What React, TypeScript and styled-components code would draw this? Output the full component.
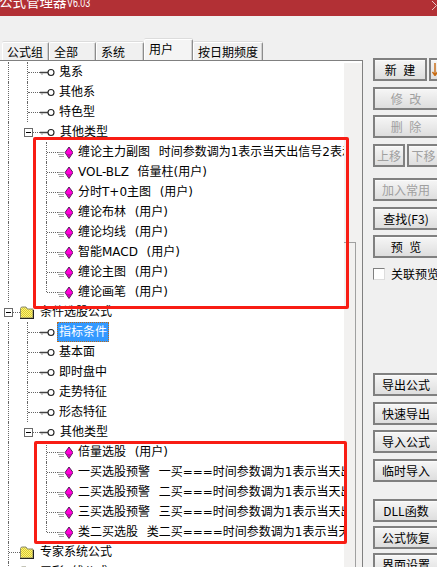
import React from 'react';
import styled, { createGlobalStyle } from 'styled-components';

const FONT = '"DejaVu Sans", "Noto Sans CJK SC", sans-serif';

const GlobalStyle = createGlobalStyle`
  html, body {
    margin: 0;
    padding: 0;
    background: #f0f0f0;
  }
`;

const Window = styled.div`
  width: 437px;
  height: 567px;
  overflow: hidden;
  display: flex;
  flex-direction: column;
  background: #f0f0f0;
  font-family: "Noto Sans CJK SC", "Liberation Sans", sans-serif;
  font-size: 12px;
  color: #000;
`;

const TitleBar = styled.div`
  height: 16px;
  flex: none;
  background: #b23035;
  color: #fff;
  display: flex;
  justify-content: space-between;
  align-items: flex-end;
  overflow: hidden;
`;

const TitleText = styled.span`
  font-size: 13.5px;
  line-height: 20px;
  white-space: nowrap;
  margin: 0 0 3px -1px;
`;

// the version number is drawn much narrower than the font gives
const Version = styled.span`
  display: inline-block;
  font-family: "Liberation Sans", sans-serif;
  font-size: 13px;
  transform: scaleX(0.68);
  transform-origin: left center;
`;

const CloseMark = styled.svg`
  width: 5px;
  height: 9px;
  margin: 0 0 5px;
  align-self: center;
`;

const Body = styled.div`
  flex: 1;
  min-height: 0;
  display: flex;
`;

const LeftColumn = styled.div`
  width: 363px;
  flex: none;
  display: flex;
  flex-direction: column;
`;

const TabStrip = styled.div`
  height: 44px;
  flex: none;
  display: flex;
  align-items: flex-end;
  padding-left: 2px;
`;

const Tab = styled.div<{ $width: number; $active?: boolean }>`
  width: ${p => p.$width}px;
  height: ${p => (p.$active ? 21 : 18)}px;
  box-sizing: border-box;
  padding-left: 4px;
  border: 1px solid #8c8c8c;
  border-top-color: #fff;
  border-left-color: #fff;
  border-bottom: none;
  border-radius: 2px 2px 0 0;
  box-shadow: inset -1px 0 0 #d0d0d0, 0 -1px 0 #dcdcdc;
  background: ${p => (p.$active ? '#f4f4f4' : '#f0f0f0')};
  line-height: ${p => (p.$active ? 17 : 18)}px;
  white-space: nowrap;
`;

const TreePanel = styled.div`
  flex: 1;
  min-height: 0;
  display: flex;
  position: relative;
  border-top: 1px solid #808080;
  border-right: 1px solid #808080;
`;

const TreeList = styled.div`
  width: 344px;
  flex: none;
  overflow: hidden;
  background: #fff;
  padding-top: 1px;
`;

const ScrollTrack = styled.div`
  flex: 1;
  background: #f2f1f0;
  border-top: 2px solid #fff;
  padding-top: 179px;
`;

const ScrollEdge = styled.div`
  width: 12px;
  height: 400px;
  box-sizing: border-box;
  border-top: 1px solid #a0a0a0;
  border-right: 1px solid #a0a0a0;
`;

const Row = styled.div`
  height: 20px;
  display: flex;
  align-items: stretch;
  white-space: nowrap;
`;

const Guide = styled.div<{ $width: number; $line?: 'full' | 'half' | 'none' }>`
  width: ${p => p.$width}px;
  flex: none;
  position: relative;
  &::before {
    content: '';
    display: ${p => (p.$line && p.$line !== 'none' ? 'block' : 'none')};
    height: ${p => (p.$line === 'half' ? '10px' : '20px')};
    width: 0;
    border-left: 1px dotted #666;
    position: absolute;
    right: 0;
    top: 0;
  }
`;

const Connector = styled.div<{ $width: number }>`
  width: ${p => p.$width}px;
  height: 0;
  flex: none;
  align-self: center;
  border-top: 1px dotted #666;
`;

const ExpandBox = styled.div`
  width: 9px;
  height: 9px;
  flex: none;
  align-self: center;
  box-sizing: border-box;
  border: 1px solid #6a6a6a;
  background: #fff;
  position: relative;
  margin-top: 1px;
  &::after {
    content: '';
    position: absolute;
    left: 1px;
    top: 3px;
    width: 5px;
    height: 1px;
    background: #000;
  }
`;

const Label = styled.span<{ $gap: number; $selected?: boolean }>`
  margin-left: ${p => (p.$selected ? p.$gap - 1 : p.$gap)}px;
  padding: 0 ${p => (p.$selected ? 2 : 1)}px;
  font-family: ${FONT};
  line-height: 20px;
  white-space: pre;
  word-spacing: 0.5px;
  ${p =>
    p.$selected
      ? `
    background: #3399ff;
    color: #fff;
    outline: 1px dotted #b86a1c;
    outline-offset: -1px;
  `
      : ''}
`;

const IconBox = styled.svg`
  flex: none;
  align-self: center;
`;

const KeyIcon = () => (
  <IconBox width="15" height="9" viewBox="0 0 15 9">
    <path d="M0 4.5h8" stroke="#444" strokeWidth="1.5" fill="none" />
    <path d="M1 6h2" stroke="#999" strokeWidth="1" fill="none" />
    <circle cx="11" cy="4.5" r="3" fill="#fff" stroke="#222" strokeWidth="1.1" />
  </IconBox>
);

const FormulaIcon = () => (
  <IconBox width="15" height="13" viewBox="0 0 15 13">
    <path d="M0 6.5h6M0 8.5h6M1 10.5h5" stroke="#a5a5a5" strokeWidth="1" fill="none" />
    <path d="M11 1L15 6.5L11 12.5L7 6.5Z" fill="#ff00d8" stroke="#2a0a33" strokeWidth="0.8" />
    <path d="M8.5 8L11 11.2L13.5 8Z" fill="#c800b0" />
  </IconBox>
);

const FolderIcon = () => (
  <IconBox width="14" height="13" viewBox="0 0 14 13">
    <defs>
      <pattern id="dither" width="2" height="2" patternUnits="userSpaceOnUse">
        <rect width="2" height="2" fill="#fff27a" />
        <rect width="1" height="1" fill="#d8cc30" />
        <rect x="1" y="1" width="1" height="1" fill="#d8cc30" />
      </pattern>
    </defs>
    <path d="M0.5 12V2.5L1.5 1H6L7.5 3H13V12Z" fill="url(#dither)" stroke="#8a8a70" strokeWidth="1" />
    <path d="M0 12.5H14M13.5 4V13" stroke="#222" strokeWidth="1" />
  </IconBox>
);

type RowItem = { kind: 'root' | 'group' | 'key' | 'item'; text: string; selected?: boolean; last?: boolean; open?: boolean };

const rows: RowItem[] = [
  { kind: 'key', text: '鬼系' },
  { kind: 'key', text: '其他系' },
  { kind: 'key', text: '特色型' },
  { kind: 'group', text: '其他类型' },
  { kind: 'item', text: '缠论主力副图  时间参数调为1表示当天出信号2表示第二天' },
  { kind: 'item', text: 'VOL-BLZ  倍量柱(用户)' },
  { kind: 'item', text: '分时T+0主图  (用户)' },
  { kind: 'item', text: '缠论布林  (用户)' },
  { kind: 'item', text: '缠论均线  (用户)' },
  { kind: 'item', text: '智能MACD  (用户)' },
  { kind: 'item', text: '缠论主图  (用户)' },
  { kind: 'item', text: '缠论画笔  (用户)', last: true },
  { kind: 'root', text: '条件选股公式', open: true },
  { kind: 'key', text: '指标条件', selected: true },
  { kind: 'key', text: '基本面' },
  { kind: 'key', text: '即时盘中' },
  { kind: 'key', text: '走势特征' },
  { kind: 'key', text: '形态特征' },
  { kind: 'group', text: '其他类型' },
  { kind: 'item', text: '倍量选股  (用户)' },
  { kind: 'item', text: '一买选股预警  一买===时间参数调为1表示当天出信号2表示' },
  { kind: 'item', text: '二买选股预警  二买===时间参数调为1表示当天出信号2表示' },
  { kind: 'item', text: '三买选股预警  三买===时间参数调为1表示当天出信号2表示' },
  { kind: 'item', text: '类二买选股  类二买====时间参数调为1表示当天出信号2表示', last: true },
  { kind: 'root', text: '专家系统公式' },
  { kind: 'root', text: '五彩K线公式' },
];

const TreeRow = ({ row }: { row: RowItem }) => {
  if (row.kind === 'root') {
    return (
      <Row>
        {row.open ? (
          <>
            <Guide $width={4} />
            <ExpandBox />
            <Connector $width={7} />
          </>
        ) : (
          <>
            <Guide $width={9} $line="full" />
            <Connector $width={11} />
          </>
        )}
        <FolderIcon />
        <Label $gap={5}>{row.text}</Label>
      </Row>
    );
  }
  if (row.kind === 'key') {
    return (
      <Row>
        <Guide $width={9} $line="full" />
        <Guide $width={19} $line="full" />
        <Connector $width={12} />
        <KeyIcon />
        <Label $gap={3} $selected={row.selected}>
          {row.text}
        </Label>
      </Row>
    );
  }
  if (row.kind === 'group') {
    return (
      <Row>
        <Guide $width={9} $line="full" />
        <Guide $width={15} />
        <ExpandBox />
        <Connector $width={7} />
        <KeyIcon />
        <Label $gap={4}>{row.text}</Label>
      </Row>
    );
  }
  return (
    <Row>
      <Guide $width={9} $line="full" />
      <Guide $width={38} $line={row.last ? 'half' : 'full'} />
      <Connector $width={11} />
      <FormulaIcon />
      <Label $gap={4}>{row.text}</Label>
    </Row>
  );
};

const RedFrame = styled.div<{ $left: number; $top: number; $width: number; $height: number }>`
  position: absolute;
  left: ${p => p.$left}px;
  top: ${p => p.$top}px;
  width: ${p => p.$width}px;
  height: ${p => p.$height}px;
  box-sizing: border-box;
  border: 3px solid #f81d14;
  border-radius: 2px;
  pointer-events: none;
`;

const RightColumn = styled.div`
  flex: 1;
  min-width: 0;
  overflow: hidden;
  padding: 42px 0 0 10px;
  display: flex;
  flex-direction: column;
  align-items: flex-start;
`;

const ButtonRow = styled.div<{ $top?: number }>`
  display: flex;
  gap: 2px;
  margin-top: ${p => p.$top ?? 0}px;
`;

const Button = styled.div<{ $width?: number; $top?: number; $disabled?: boolean }>`
  width: ${p => p.$width ?? 66}px;
  height: 23px;
  flex: none;
  box-sizing: border-box;
  margin-top: ${p => p.$top ?? 0}px;
  border: 2px solid #808080;
  box-shadow: inset 0 1px 0 #fbfbfb;
  background: linear-gradient(#f6f6f6, #dedede);
  color: ${p => (p.$disabled ? '#a0a0a0' : '#000')};
  display: flex;
  align-items: center;
  justify-content: center;
  line-height: 19px;
  white-space: pre;
  word-spacing: 0.5px;
`;

const ArrowButton = styled(Button)`
  justify-content: flex-start;
  padding-left: 1px;
`;

const CheckRow = styled.div`
  display: flex;
  align-items: center;
  gap: 6px;
  margin-top: 9px;
  height: 13px;
  white-space: nowrap;
`;

const CheckBox = styled.div`
  width: 12px;
  height: 12px;
  flex: none;
  box-sizing: border-box;
  border: 1px solid #808080;
  border-right-color: #ddd;
  border-bottom-color: #ddd;
  background: #fff;
`;

const DownArrow = () => (
  <svg width="6" height="13" viewBox="0 0 6 13">
    <path d="M3 0V12M0.5 9L3 12.5L5.5 9" stroke="#c86a10" strokeWidth="1.4" fill="none" />
  </svg>
);

const tabs = [
  { text: '公式组', width: 47 },
  { text: '全部', width: 47 },
  { text: '系统', width: 48 },
  { text: '用户', width: 49, active: true },
  { text: '按日期频度', width: 70 },
];

export default function App() {
  return (
    <Window>
      <GlobalStyle />
      <TitleBar>
        <TitleText>
          公式管理器<Version>V6.03</Version>
        </TitleText>
        <CloseMark viewBox="0 0 5 9">
          <path d="M0 0L4.5 4.5L0 9" stroke="#e9c4c4" strokeWidth="1" fill="none" />
        </CloseMark>
      </TitleBar>
      <Body>
        <LeftColumn>
          <TabStrip>
            {tabs.map(tab => (
              <Tab key={tab.text} $width={tab.width} $active={tab.active}>
                {tab.text}
              </Tab>
            ))}
          </TabStrip>
          <TreePanel>
            <TreeList>
              {rows.map((row, ind) => (
                <TreeRow key={`row-${ind}`} row={row} />
              ))}
            </TreeList>
            <ScrollTrack>
              <ScrollEdge />
            </ScrollTrack>
            <RedFrame $left={33} $top={76} $width={316} $height={172} />
            <RedFrame $left={34} $top={380} $width={313} $height={103} />
          </TreePanel>
        </LeftColumn>
        <RightColumn>
          <ButtonRow>
            <Button $width={54}>新  建</Button>
            <ArrowButton $width={30}>
              <DownArrow />
            </ArrowButton>
          </ButtonRow>
          <Button $top={6} $disabled>修  改</Button>
          <Button $top={5} $disabled>删  除</Button>
          <ButtonRow $top={6}>
            <Button $width={32} $disabled>上移</Button>
            <Button $width={33} $disabled>下移</Button>
          </ButtonRow>
          <Button $top={11} $disabled>加入常用</Button>
          <Button $top={6}>查找(F3)</Button>
          <Button $top={5}>预  览</Button>
          <CheckRow>
            <CheckBox />
            关联预览
          </CheckRow>
          <Button $top={93}>导出公式</Button>
          <Button $top={6}>快速导出</Button>
          <Button $top={5}>导入公式</Button>
          <Button $top={6}>临时导入</Button>
          <Button $top={17}>DLL函数</Button>
          <Button $top={4}>公式恢复</Button>
          <Button $top={4}>界面设置</Button>
        </RightColumn>
      </Body>
    </Window>
  );
}
